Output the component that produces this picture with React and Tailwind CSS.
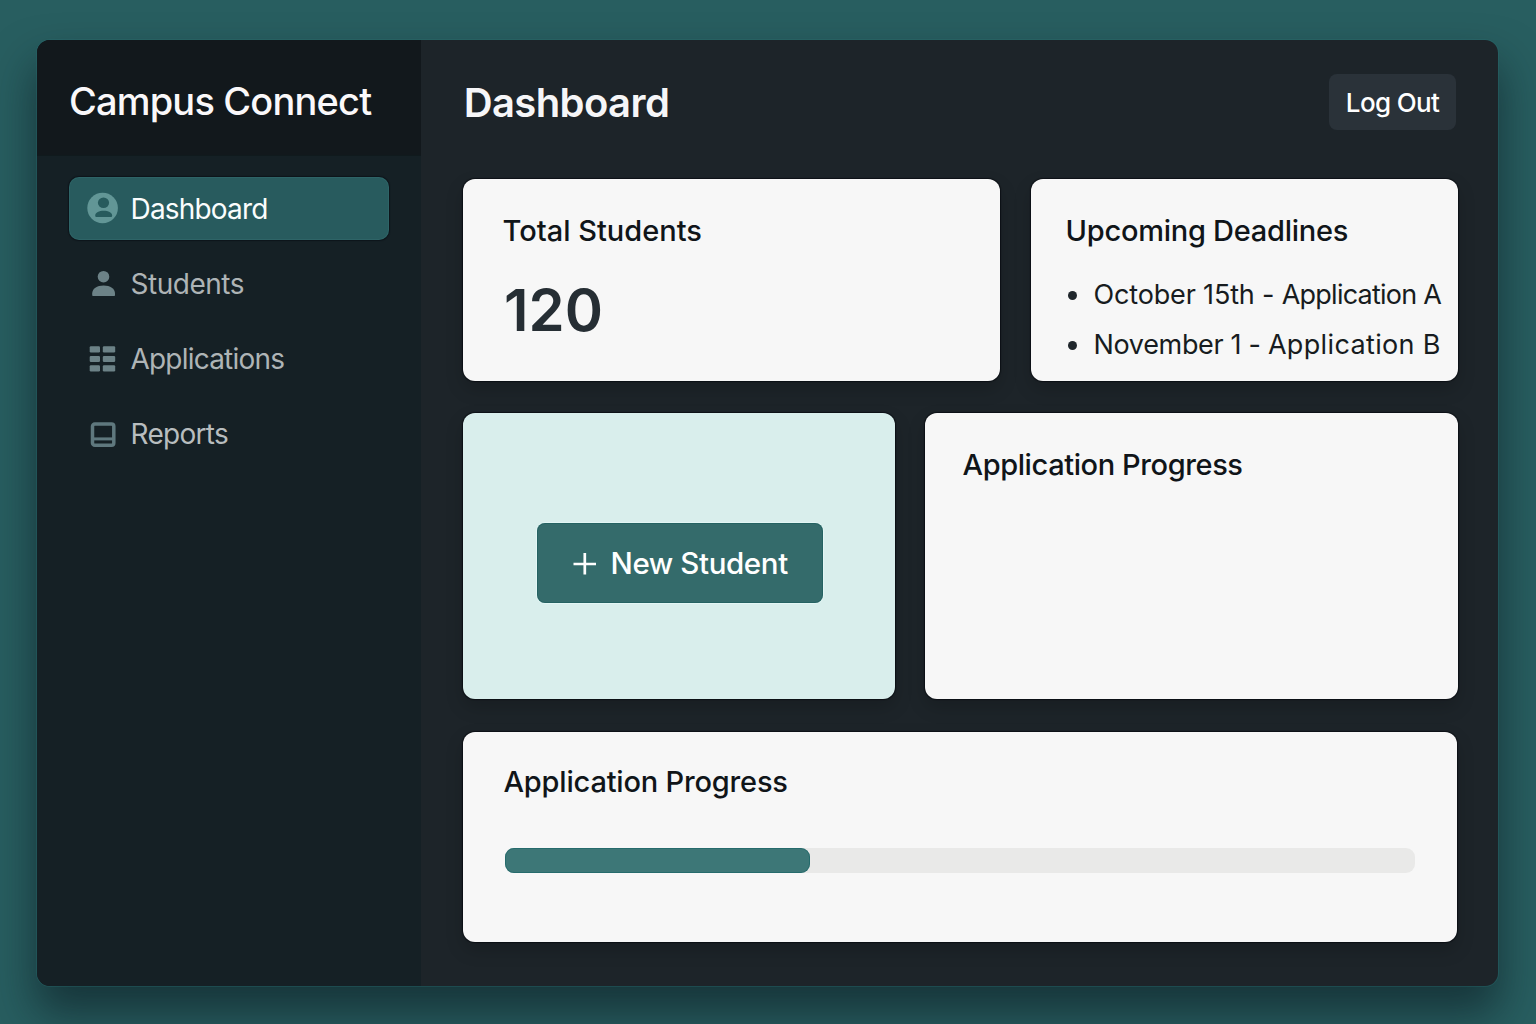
import React from "react";

const DashboardIcon = () => (
  <svg viewBox="0 0 32 32" className="h-8 w-8">
    <circle cx="15.600" cy="16" r="15.300" fill="#629696" />
    <ellipse cx="16.500" cy="10.700" rx="5.600" ry="5.200" fill="#275b5d" />
    <path d="M8.200 23.700c0-3.200 4-4.900 8.500-4.900s8.500 1.700 8.500 4.900c0 .9-.6 1.400-1.500 1.400h-14c-.9 0-1.500-.5-1.500-1.400Z" fill="#275b5d" />
  </svg>
);

const StudentsIcon = () => (
  <svg viewBox="0 0 32 32" className="h-8 w-8" fill="#6c8287">
    <circle cx="16.500" cy="9.700" r="5.800" />
    <path d="M5.200 28.200v-1.700c0-4.800 4.700-8 11.400-8s11.400 3.200 11.400 8v1.700c0 .5-.3.800-.8.800H6c-.5 0-.8-.3-.8-.8Z" />
  </svg>
);

const ApplicationsIcon = () => (
  <svg viewBox="0 0 32 32" className="h-8 w-8" fill="#6c8287">
    <rect x="2.700" y="3.200" width="10.300" height="6.200" rx="1.200" />
    <rect x="15.800" y="3.200" width="12.400" height="6.200" rx="1.200" />
    <rect x="2.700" y="12.900" width="10.300" height="6" rx="1.200" />
    <rect x="15.800" y="12.900" width="12.400" height="6" rx="1.200" />
    <rect x="2.700" y="22.200" width="10.300" height="6.200" rx="1.200" />
    <rect x="15.800" y="22.200" width="12.400" height="6.200" rx="1.200" />
  </svg>
);

const ReportsIcon = () => (
  <svg viewBox="0 0 32 32" className="h-8 w-8" fill="none" stroke="#5f787e">
    <rect x="5.500" y="6" width="21.300" height="21.300" rx="2.300" strokeWidth="3.500" />
    <path d="M6.500 20.900h19.500" strokeWidth="3" />
  </svg>
);

const navItems = [
  { label: "Dashboard", icon: DashboardIcon, item: "bg-[#285b5e] shadow-[0_0_1px_1px_rgba(9,14,20,0.6),inset_0_0_0_1px_rgba(70,140,140,0.2)]", text: "pt-[1.5px] pl-[11.5px] tracking-[-0.82px] text-[#fafdfd]" },
  { label: "Students", icon: StudentsIcon, item: "", text: "pt-[1.5px] pl-[11.5px] tracking-[-0.47px] text-[#aeb4b6]" },
  { label: "Applications", icon: ApplicationsIcon, item: "", text: "pt-[1.5px] pl-[11.5px] tracking-[-0.8px] text-[#aeb4b6]" },
  { label: "Reports", icon: ReportsIcon, item: "", text: "pl-[11.5px] tracking-[-0.72px] text-[#b8bdbf]" },
];

const Sidebar = () => (
  <aside className="flex w-[384px] flex-col bg-[#152025]">
    <div className="flex h-[116px] items-center border-b border-[#101a1d] bg-[#12181c] pl-[32px] pt-[6px]">
      <span className="whitespace-nowrap text-[38px] font-medium leading-[48px] tracking-[-0.83px] text-[#faf8fa]">Campus Connect</span>
    </div>
    <nav className="flex flex-col gap-[12.700px] px-8 pt-[21px]">
      {navItems.map(({ label, icon: Icon, item, text }) => (
        <a key={label} className={`flex h-[62.5px] items-center rounded-[10px] pl-[18px] ${item}`}>
          <Icon />
          <span className={`text-[28px] leading-[40px] ${text}`}>{label}</span>
        </a>
      ))}
    </nav>
  </aside>
);

const Card = ({ className, children }) => (
  <section className={`rounded-[12px] shadow-[0_0_1px_1px_rgba(5,9,14,0.7),0_8px_18px_rgba(0,0,0,0.18)] ${className}`}>{children}</section>
);

const CardTitle = ({ className = "", children }) => (
  <h2 className={`whitespace-nowrap text-[29px] font-medium leading-[40px] text-[#101519] ${className}`}>{children}</h2>
);

const Deadline = ({ children }) => (
  <li className="flex h-[50px] items-center">
    <span className="mr-[16.5px] h-[9px] w-[9px] shrink-0 rounded-full bg-[#20272c]" />
    <span className="whitespace-pre text-[27px] leading-[50px]">{children}</span>
  </li>
);

export default function App() {
  return (
    <div className="flex h-[1024px] w-[1536px] overflow-hidden bg-[#285e60] pl-[37px] pt-[40px] font-['Inter',sans-serif]">
      <div className="flex h-[945.500px] w-[1461px] overflow-hidden rounded-[13px] bg-[#1d2429] shadow-[0_0_0_1px_rgba(40,110,112,0.35),0_26px_44px_2px_rgba(12,26,34,0.6)]">
        <Sidebar />
        <main className="flex flex-1 flex-col pl-[42px]">
          <header className="flex h-[139px] items-start justify-between pr-[42px] pt-[34px]">
            <h1 className="pl-[0.7px] pt-[4px] text-[40px] font-semibold leading-[50px] tracking-[-0.6px] text-[#f6f6f8]">Dashboard</h1>
            <button className="h-[56px] w-[127px] rounded-[8px] bg-[#2a3239] pt-[1px] text-[26px] font-medium leading-[55px] tracking-[-0.65px] text-white">Log Out</button>
          </header>

          <div className="flex flex-col">
            <div className="flex h-[202px] gap-[31px]">
              <Card className="w-[537px] bg-[#f7f7f7] pl-[39.5px] pt-[32px]">
                <CardTitle>Total Students</CardTitle>
                <p className="pl-[1.5px] pt-[24px] text-[58px] font-semibold leading-[70px] text-[#262e34]">120</p>
              </Card>
              <Card className="w-[427px] bg-[#f7f7f7] pl-[34.5px] pt-[32px]">
                <CardTitle className="tracking-[-0.25px]">Upcoming Deadlines</CardTitle>
                <ul className="pl-[2.5px] pt-[19px] text-[#171c20]">
                  <Deadline>
                    <span className="tracking-[-0.16px]">October 15th - </span>
                    <span className="tracking-[-0.78px]">Application A</span>
                  </Deadline>
                  <Deadline>
                    <span className="tracking-[-0.33px]">November 1 - </span>
                    <span className="tracking-[0.35px]">Application B</span>
                  </Deadline>
                </ul>
              </Card>
            </div>

            <div className="mt-[32px] flex h-[286px] gap-[30px]">
              <Card className="flex w-[432px] items-center justify-center bg-[#d9eeec] pl-[2px] pt-[14px]">
                <button className="flex h-[80px] w-[286px] items-center rounded-[8px] bg-[#346b6b] pl-[36px] text-white shadow-[0_0_1px_1px_rgba(240,255,255,0.5),inset_0_0_0_1px_rgba(15,85,85,0.4)]">
                  <svg viewBox="0 0 24 24" className="mt-px h-6 w-6" stroke="currentColor" strokeWidth="2.700">
                    <path d="M.5 12h22.500M11.800 1v21.500" />
                  </svg>
                  <span className="whitespace-nowrap pl-[13.5px] text-[29.500px] font-medium leading-[40px] tracking-[-0.4px]">New Student</span>
                </button>
              </Card>
              <Card className="w-[533px] bg-[#f7f7f7] pl-[37.5px] pt-[32px]">
                <CardTitle className="tracking-[-0.4px]">Application Progress</CardTitle>
              </Card>
            </div>

            <Card className="mt-[32.5px] h-[210.500px] w-[994px] bg-[#f7f7f7] pl-[40.5px] pt-[30.5px]">
              <CardTitle className="tracking-[-0.19px]">Application Progress</CardTitle>
              <div className="ml-[1.5px] mt-[46px] h-[25px] w-[909.500px] rounded-[9px] bg-[#e9e9e8]">
                <div className="h-full w-[305px] rounded-[9px] bg-[#3d7777] shadow-[inset_0_0_0_1px_rgba(15,95,98,0.5)]" />
              </div>
            </Card>
          </div>
        </main>
      </div>
    </div>
  );
}
